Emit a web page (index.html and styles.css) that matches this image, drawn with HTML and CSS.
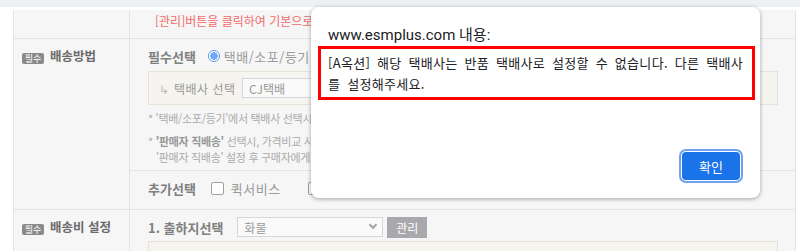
FILE: index.html
```html
<!DOCTYPE html>
<html lang="ko">
<head>
    <meta charset="UTF-8">
    <meta name="viewport" content="width=device-width, initial-scale=1.0">
    <title>배송정보 설정</title>
    <link rel="stylesheet" href="styles.css">
</head>
<body>
    <div class="topbar"></div>
    <div class="page">
        <div class="row">
            <div class="label"></div>
            <div class="cell">
                <p class="warn">[관리]버튼을 클릭하여 기본으로 사용할 출하지를 설정해주세요.</p>
            </div>
        </div>

        <div class="row">
            <div class="label"><span class="badge">필수</span>배송방법</div>
            <div class="cell">
                <div class="sub sub-main">
                    <div class="line">
                        <b class="title">필수선택</b>
                        <span class="radio on"></span><span class="opt">택배/소포/등기</span>
                    </div>
                    <div class="box">
                        <span class="arrow">↳</span>
                        <span class="box-label">택배사 선택</span>
                        <span class="select">CJ택배</span>
                    </div>
                    <p class="note">* '택배/소포/등기'에서 택배사 선택시 반품 택배사로 지정됩니다.</p>
                    <p class="note">* <b>'판매자 직배송'</b> 선택시, 가격비교 사이트에 노출되지 않습니다.<br>
                        <span class="indent">'판매자 직배송' 설정 후 구매자에게 안내해주세요.</span></p>
                </div>
                <div class="sub">
                    <div class="line">
                        <b class="title">추가선택</b>
                        <span class="check"></span><span class="opt">퀵서비스</span>
                        <span class="check"></span><span class="opt">방문수령</span>
                    </div>
                </div>
            </div>
        </div>

        <div class="row">
            <div class="label"><span class="badge">필수</span>배송비 설정</div>
            <div class="cell">
                <div class="sub sub-fee">
                    <div class="line">
                        <b class="title">1. 출하지선택</b>
                        <span class="select select-wide">화물<span class="chev"></span></span>
                        <button type="button" class="btn-gray">관리</button>
                    </div>
                    <div class="box box-tall"></div>
                </div>
            </div>
        </div>
    </div>

    <div class="dialog">
        <div class="dialog-title">www.esmplus.com 내용:</div>
        <div class="dialog-msg">[A옥션] 해당 택배사는 반품 택배사로 설정할 수 없습니다. 다른 택배사를 설정해주세요.</div>
        <div class="dialog-foot">
            <button type="button" class="btn-ok">확인</button>
        </div>
    </div>
</body>
</html>
```

FILE: styles.css
```css
body {
    margin: 0;
    background: #fff;
    font-family: "Noto Sans CJK KR", sans-serif;
    color: #999;
    font-size: 12px;
    overflow: hidden;
}
p {
    margin: 0;
}
.topbar {
    height: 7px;
    background: #eff0f2;
}
.page {
    margin: 3px 4px 0 13px;
    background: #f6f6f6;
    border-left: 1px solid #e4e4e4;
    border-right: 1px solid #e4e4e4;
}
.row {
    display: flex;
    border-bottom: 1px solid #e4e4e4;
}
.label {
    width: 116px;
    flex-shrink: 0;
    border-right: 1px solid #e4e4e4;
    padding: 7px 0 0 8px;
    box-sizing: border-box;
    font-size: 12.5px;
    font-weight: bold;
    line-height: 20px;
    color: #6a6a6a;
}
.badge {
    display: inline-block;
    width: 22px;
    height: 11px;
    line-height: 11px;
    margin-right: 6px;
    vertical-align: -1px;
    background: #8a8a8a;
    color: #fff;
    border-radius: 2px;
    font-size: 9px;
    font-weight: normal;
    text-align: center;
}
.cell {
    flex: 1;
}
.warn {
    padding: 2px 0 8px 25px;
    line-height: 18px;
    color: #f26a6a;
    font-size: 12px;
}
.sub {
    padding: 7px 17px 11px 18px;
}
.sub-main {
    padding-bottom: 5px;
    border-bottom: 1px solid #e4e4e4;
}
.sub-fee {
    padding-top: 7px;
    padding-bottom: 0;
}
.line {
    display: flex;
    align-items: center;
    height: 20px;
}
.title {
    font-size: 13px;
    color: #808080;
    margin-right: 12px;
}
.opt {
    font-size: 13px;
    color: #9a9a9a;
    margin-right: 24px;
    letter-spacing: 0.5px;
}
.radio {
    width: 10px;
    height: 10px;
    border: 1px solid #9a9a9a;
    border-radius: 50%;
    margin-right: 4px;
    background: #fff;
    box-sizing: content-box;
}
.radio.on {
    border-color: #5d9cf2;
    background: radial-gradient(circle, #6ea9f5 0 3.5px, #fff 4px);
    box-shadow: inset 0 0 0 1px #fff;
}
.check {
    width: 11px;
    height: 11px;
    border: 1px solid #a0a0a0;
    border-radius: 2px;
    background: #fff;
    margin: 0 7px 0 3px;
}
.box {
    margin-top: 5px;
    height: 32px;
    background: #f5f4ee;
    border: 1px solid #e6e3d6;
    display: flex;
    align-items: center;
    padding-left: 10px;
}
.box-tall {
    height: 40px;
    margin-top: 4px;
}
.arrow {
    color: #bbb;
    font-size: 12px;
    width: 15px;
}
.box-label {
    width: 66px;
    font-size: 12px;
    letter-spacing: 0.5px;
    color: #999;
    margin-right: 2px;
    white-space: nowrap;
}
.select {
    display: inline-flex;
    align-items: center;
    width: 140px;
    height: 20px;
    box-sizing: border-box;
    border: 1px solid #d6d6de;
    background: #fafafa;
    padding-left: 6px;
    font-size: 12px;
    color: #999;
}
.select-wide {
    width: 146px;
    margin-left: 2px;
    position: relative;
}
.chev {
    position: absolute;
    right: 6px;
    top: 4px;
    width: 4px;
    height: 4px;
    border-right: 2px solid #a5a5a5;
    border-bottom: 2px solid #a5a5a5;
    transform: rotate(45deg);
}
.note {
    margin-top: 5px;
    font-size: 11px;
    line-height: 16px;
    color: #aaa;
    letter-spacing: -0.3px;
}
.note + .note {
    margin-top: 7px;
}
.note b {
    color: #999;
}
.indent {
    padding-left: 8px;
}
.btn-gray {
    margin-left: 4px;
    height: 21px;
    width: 40px;
    border: none;
    background: #a9a9ad;
    color: #fff;
    font-family: "Noto Sans CJK KR", sans-serif;
    font-size: 12px;
    padding: 0;
}
.dialog {
    position: absolute;
    left: 311px;
    top: 7px;
    width: 449px;
    height: 191px;
    box-sizing: border-box;
    background: #fff;
    border-radius: 8px;
    box-shadow: 0 1px 4px rgba(0, 0, 0, 0.35);
    padding: 17px 5px 0 7px;
    font-family: Roboto, "Noto Sans CJK KR", sans-serif;
    color: #202124;
}
.dialog-title {
    font-size: 15px;
    line-height: 22px;
    padding-left: 10px;
}
.dialog-msg {
    width: 437px;
    height: 54px;
    box-sizing: border-box;
    border: 3px solid #f00;
    padding: 3px 0 0 7px;
    font-size: 13px;
    line-height: 21px;
    letter-spacing: 0.3px;
    word-spacing: 3px;
    font-family: "Noto Sans CJK KR", sans-serif;
}
.dialog-foot {
    display: flex;
    justify-content: flex-end;
    padding: 52px 15px 0 0;
}
.btn-ok {
    width: 58px;
    height: 28px;
    border: none;
    border-radius: 4px;
    background: #1a73e8;
    color: #fff;
    font-family: "Noto Sans CJK KR", sans-serif;
    font-size: 13px;
    box-shadow: 0 0 0 1px #fff, 0 0 0 3px #6ea2f0;
}
```
